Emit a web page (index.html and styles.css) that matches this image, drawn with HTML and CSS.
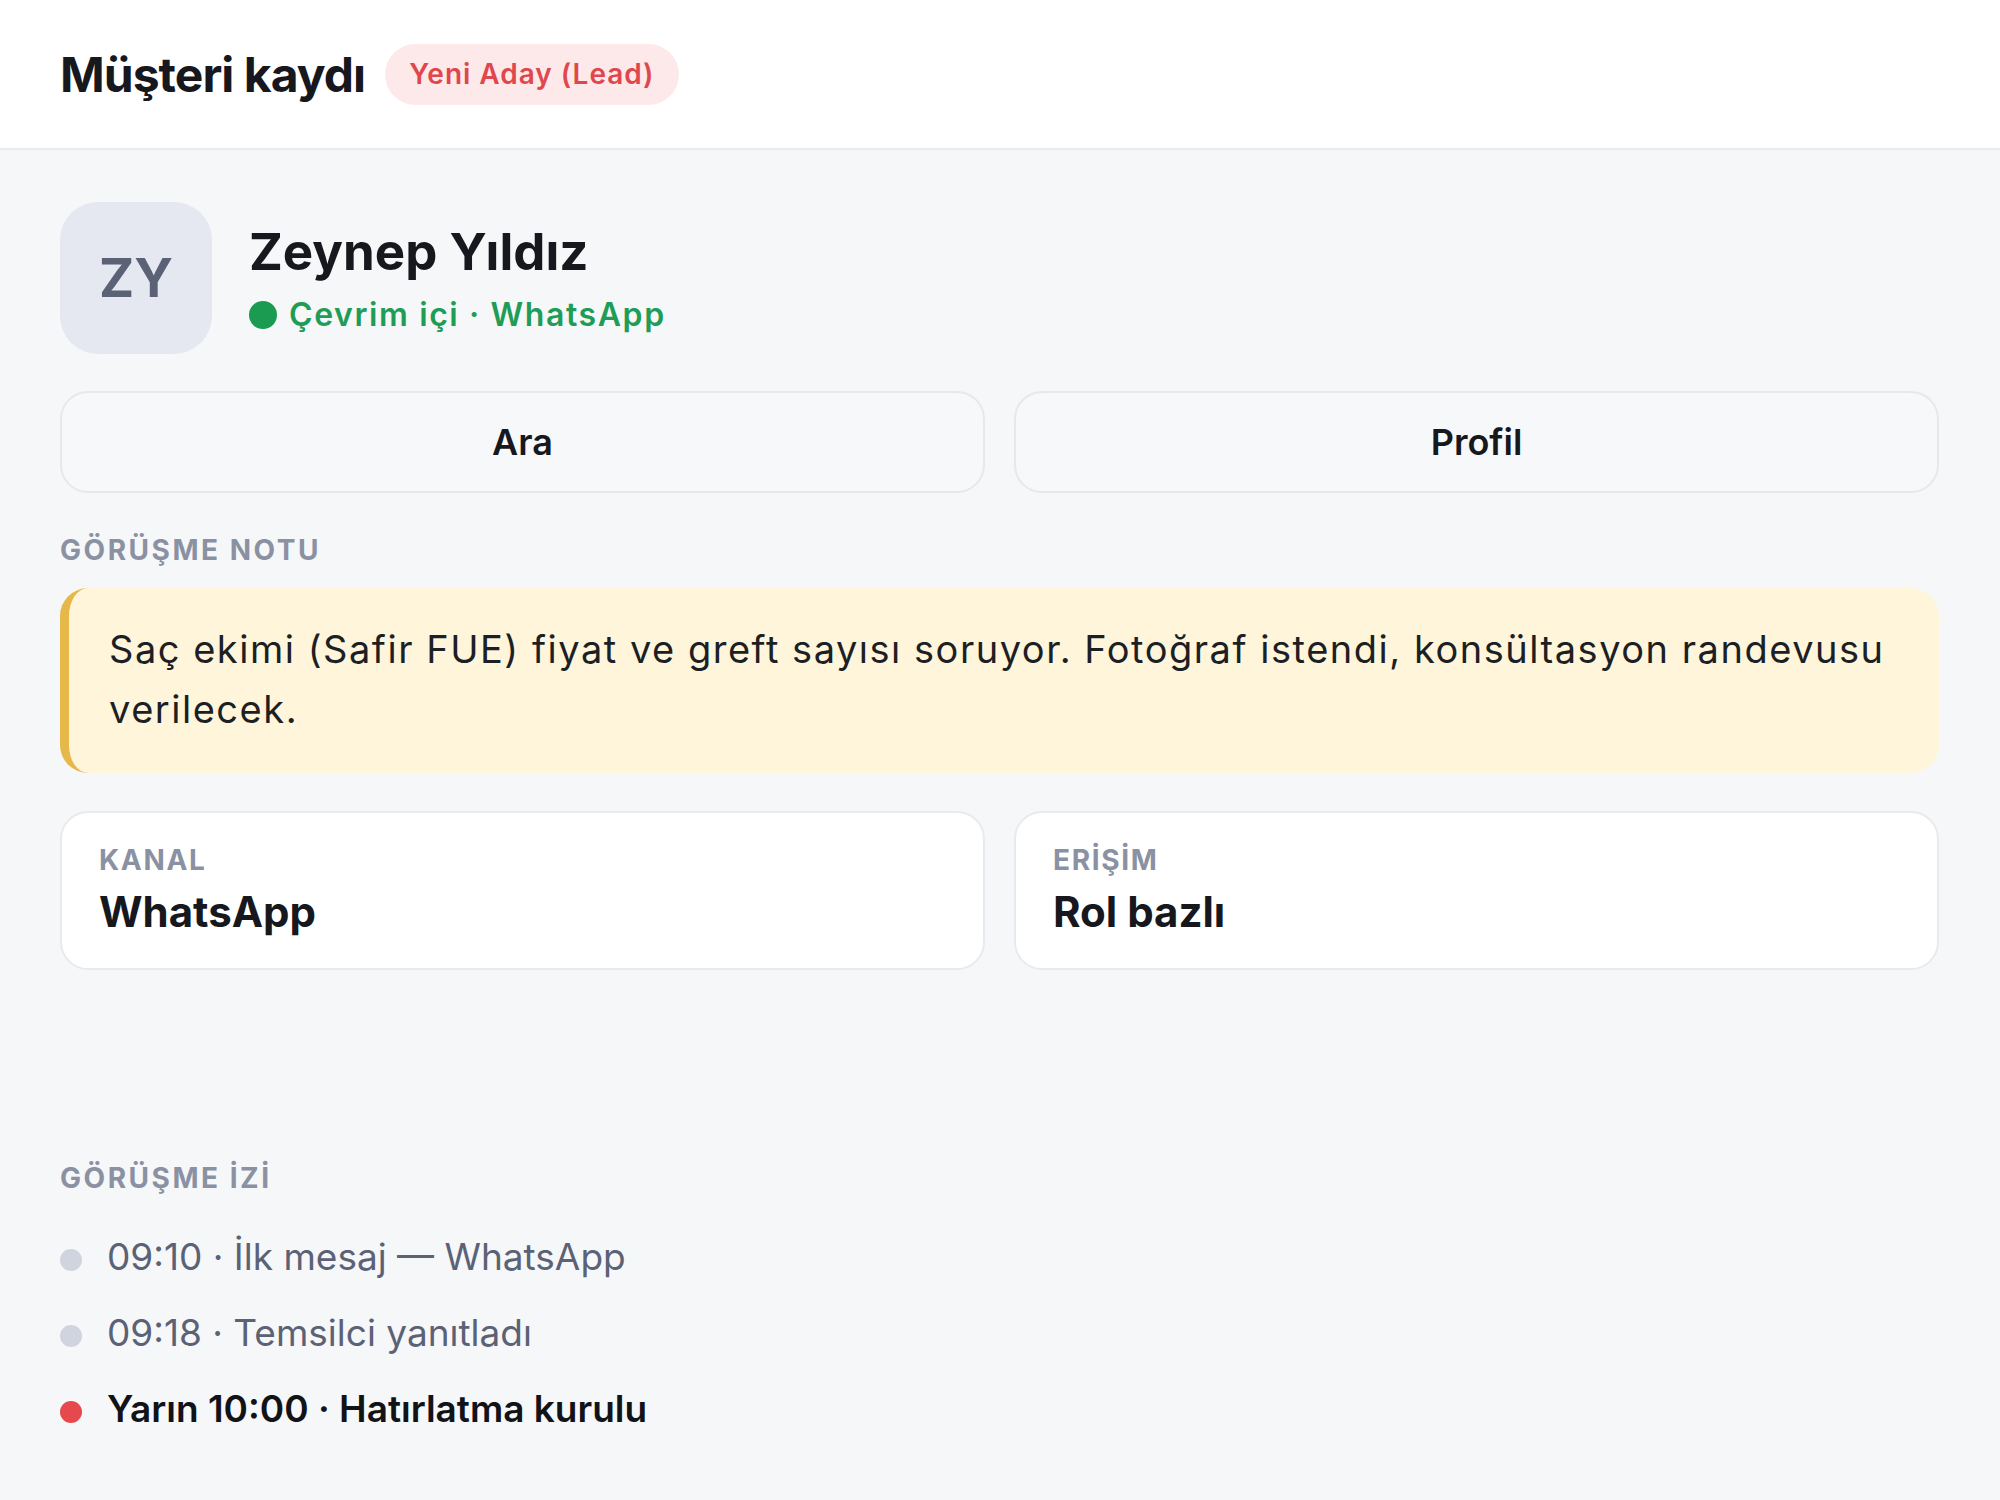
FILE: index.html
```html
<!DOCTYPE html>
<html lang="tr">
<head>
<meta charset="utf-8">
<title>Müşteri kaydı</title>
<link rel="stylesheet" href="styles.css">
</head>
<body>
  <header class="topbar">
    <h1 class="topbar-title">Müşteri kaydı</h1>
    <span class="badge badge-lead">Yeni Aday (Lead)</span>
  </header>

  <main class="record">
    <section class="contact">
      <div class="avatar">ZY</div>
      <div class="contact-info">
        <div class="contact-name">Zeynep Yıldız</div>
        <div class="contact-status"><span class="status-dot"></span>Çevrim içi · WhatsApp</div>
      </div>
    </section>

    <div class="actions">
      <button class="action-btn" type="button">Ara</button>
      <button class="action-btn" type="button">Profil</button>
    </div>

    <h2 class="section-label label-note">GÖRÜŞME NOTU</h2>
    <div class="note">Saç ekimi (Safir FUE) fiyat ve greft sayısı soruyor. Fotoğraf istendi, konsültasyon randevusu verilecek.</div>

    <div class="facts">
      <div class="fact">
        <div class="fact-key">KANAL</div>
        <div class="fact-value">WhatsApp</div>
      </div>
      <div class="fact">
        <div class="fact-key">ERİŞİM</div>
        <div class="fact-value">Rol bazlı</div>
      </div>
    </div>

    <section class="trail">
      <h2 class="section-label">GÖRÜŞME İZİ</h2>
      <ul class="trail-list">
        <li class="trail-item"><span class="trail-dot"></span>09:10 · İlk mesaj — WhatsApp</li>
        <li class="trail-item"><span class="trail-dot"></span>09:18 · Temsilci yanıtladı</li>
        <li class="trail-item trail-item-active"><span class="trail-dot"></span>Yarın 10:00 · Hatırlatma kurulu</li>
      </ul>
    </section>
  </main>
</body>
</html>
```

FILE: styles.css
```css
* {
  box-sizing: border-box;
}

html, body {
  height: 100%;
}

body {
  margin: 0;
  font-family: Inter, "Noto Sans", "Liberation Sans", sans-serif;
  background: #f6f7f9;
  color: #17191e;
  display: flex;
  flex-direction: column;
}

/* Top bar */
.topbar {
  height: 150px;
  flex: none;
  background: #ffffff;
  border-bottom: 2px solid #e8eaee;
  display: flex;
  align-items: center;
  gap: 20px;
  padding: 0 60px;
}

.topbar-title {
  margin: 0;
  font-size: 48px;
  font-weight: 700;
  letter-spacing: -0.02em;
  color: #16181d;
}

.badge {
  display: inline-flex;
  align-items: center;
  height: 61px;
  padding: 0 24px;
  border-radius: 31px;
  font-size: 28px;
  font-weight: 600;
  letter-spacing: 0.035em;
}

.badge-lead {
  background: #fde9ea;
  color: #e0474c;
}

/* Record body */
.record {
  flex: 1;
  display: flex;
  flex-direction: column;
  padding: 52px 61px 63px 60px;
}

.contact {
  display: flex;
  align-items: center;
  gap: 37px;
}

.avatar {
  width: 152px;
  height: 152px;
  flex: none;
  border-radius: 38px;
  background: #e5e8f0;
  color: #5b6275;
  font-size: 53px;
  font-weight: 700;
  display: flex;
  align-items: center;
  justify-content: center;
}

.contact-name {
  font-size: 51px;
  line-height: 60px;
  font-weight: 700;
  color: #16181d;
}

.contact-status {
  margin-top: 13px;
  display: flex;
  align-items: center;
  gap: 12px;
  font-size: 32px;
  line-height: 40px;
  font-weight: 600;
  letter-spacing: 0.05em;
  color: #1f9d57;
}

.status-dot {
  width: 28px;
  height: 28px;
  border-radius: 50%;
  background: #1b9a52;
}

/* Action buttons */
.actions {
  margin-top: 37px;
  display: grid;
  grid-template-columns: 1fr 1fr;
  gap: 29px;
}

.action-btn {
  height: 102px;
  border: 2px solid #e6e8ec;
  border-radius: 28px;
  background: #f7f8fa;
  font-family: inherit;
  font-size: 36px;
  font-weight: 600;
  color: #16181d;
}

/* Section labels */
.section-label {
  margin: 0;
  font-size: 28px;
  line-height: 34px;
  font-weight: 700;
  letter-spacing: 0.09em;
  color: #8a91a3;
}

.label-note {
  margin-top: 40px;
}

/* Conversation note */
.note {
  margin-top: 21px;
  background: #fff5db;
  border-left: 9px solid #e6b849;
  border-radius: 28px;
  padding: 31px 36px 34px 40px;
  font-size: 38px;
  line-height: 60px;
  letter-spacing: 0.04em;
  color: #1c1f24;
}

/* Facts */
.facts {
  margin-top: 38px;
  display: grid;
  grid-template-columns: 1fr 1fr;
  gap: 29px;
}

.fact {
  background: #ffffff;
  border: 2px solid #e8eaee;
  border-radius: 28px;
  padding: 30px 37px 31px;
}

.fact-key {
  font-size: 28px;
  line-height: 34px;
  font-weight: 700;
  letter-spacing: 0.06em;
  color: #8a91a3;
}

.fact-value {
  margin-top: 10px;
  font-size: 42px;
  line-height: 50px;
  font-weight: 700;
  color: #16181d;
}

/* Conversation trail */
.trail {
  margin-top: auto;
}

.trail-list {
  list-style: none;
  margin: 33px 0 0;
  padding: 0;
  display: flex;
  flex-direction: column;
  gap: 19px;
}

.trail-item {
  display: flex;
  align-items: center;
  gap: 25px;
  font-size: 37px;
  line-height: 57px;
  color: #5b6275;
}

.trail-dot {
  width: 22px;
  height: 22px;
  margin-top: 6px;
  flex: none;
  border-radius: 50%;
  background: #d0d4de;
}

.trail-item-active {
  color: #111317;
  font-weight: 600;
}

.trail-item-active .trail-dot {
  background: #e5484d;
}
```
